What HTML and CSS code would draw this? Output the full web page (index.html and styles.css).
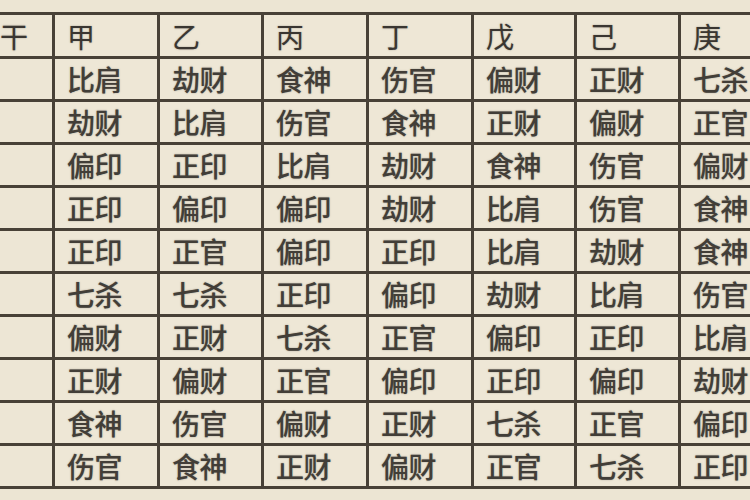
FILE: index.html
```html
<!DOCTYPE html>
<html lang="zh">
<head>
<meta charset="utf-8">
<link rel="stylesheet" href="styles.css">
</head>
<body>
<div class="page">
  <div class="table">
    <div class="cell head first">干</div><div class="cell head">甲</div><div class="cell head">乙</div><div class="cell head">丙</div><div class="cell head">丁</div><div class="cell head">戊</div><div class="cell head">己</div><div class="cell head">庚</div>
    <div class="cell first"></div><div class="cell">比肩</div><div class="cell">劫财</div><div class="cell">食神</div><div class="cell">伤官</div><div class="cell">偏财</div><div class="cell">正财</div><div class="cell">七杀</div>
    <div class="cell first"></div><div class="cell">劫财</div><div class="cell">比肩</div><div class="cell">伤官</div><div class="cell">食神</div><div class="cell">正财</div><div class="cell">偏财</div><div class="cell">正官</div>
    <div class="cell first"></div><div class="cell">偏印</div><div class="cell">正印</div><div class="cell">比肩</div><div class="cell">劫财</div><div class="cell">食神</div><div class="cell">伤官</div><div class="cell">偏财</div>
    <div class="cell first"></div><div class="cell">正印</div><div class="cell">偏印</div><div class="cell">偏印</div><div class="cell">劫财</div><div class="cell">比肩</div><div class="cell">伤官</div><div class="cell">食神</div>
    <div class="cell first"></div><div class="cell">正印</div><div class="cell">正官</div><div class="cell">偏印</div><div class="cell">正印</div><div class="cell">比肩</div><div class="cell">劫财</div><div class="cell">食神</div>
    <div class="cell first"></div><div class="cell">七杀</div><div class="cell">七杀</div><div class="cell">正印</div><div class="cell">偏印</div><div class="cell">劫财</div><div class="cell">比肩</div><div class="cell">伤官</div>
    <div class="cell first"></div><div class="cell">偏财</div><div class="cell">正财</div><div class="cell">七杀</div><div class="cell">正官</div><div class="cell">偏印</div><div class="cell">正印</div><div class="cell">比肩</div>
    <div class="cell first"></div><div class="cell">正财</div><div class="cell">偏财</div><div class="cell">正官</div><div class="cell">偏印</div><div class="cell">正印</div><div class="cell">偏印</div><div class="cell">劫财</div>
    <div class="cell first"></div><div class="cell">食神</div><div class="cell">伤官</div><div class="cell">偏财</div><div class="cell">正财</div><div class="cell">七杀</div><div class="cell">正官</div><div class="cell">偏印</div>
    <div class="cell first"></div><div class="cell">伤官</div><div class="cell">食神</div><div class="cell">正财</div><div class="cell">偏财</div><div class="cell">正官</div><div class="cell">七杀</div><div class="cell">正印</div>
  </div>
</div>
</body>
</html>
```

FILE: styles.css
```css
html, body {
  margin: 0;
  padding: 0;
}
body {
  width: 750px;
  height: 500px;
  overflow: hidden;
  background: #ece5d3;
  font-family: "Noto Sans CJK SC", "Noto Sans", sans-serif;
}
.page {
  padding-top: 12px;
  background: #ece5d3;
  height: 488px;
}
.table {
  display: grid;
  grid-template-columns: 52px 102px 101px 102px 102px 100px 101px 1fr;
  grid-template-rows: 41px;
  grid-auto-rows: 40px;
  gap: 3px;
  padding: 3px 0;
  background: #484137;
}
.cell {
  background: #eee7d6;
  color: #423e38;
  font-size: 28px;
  font-weight: 500;
  line-height: 1;
  display: flex;
  align-items: center;
  padding-left: 12px;
  letter-spacing: -0.5px;
  white-space: nowrap;
  overflow: hidden;
  text-shadow: 0 0 1.5px rgba(60,56,50,0.5);
}
.cell.first {
  padding-left: 0;
  background: #ede6d5;
}
.cell.head {
  font-weight: 400;
  color: #3a3631;
}
```
